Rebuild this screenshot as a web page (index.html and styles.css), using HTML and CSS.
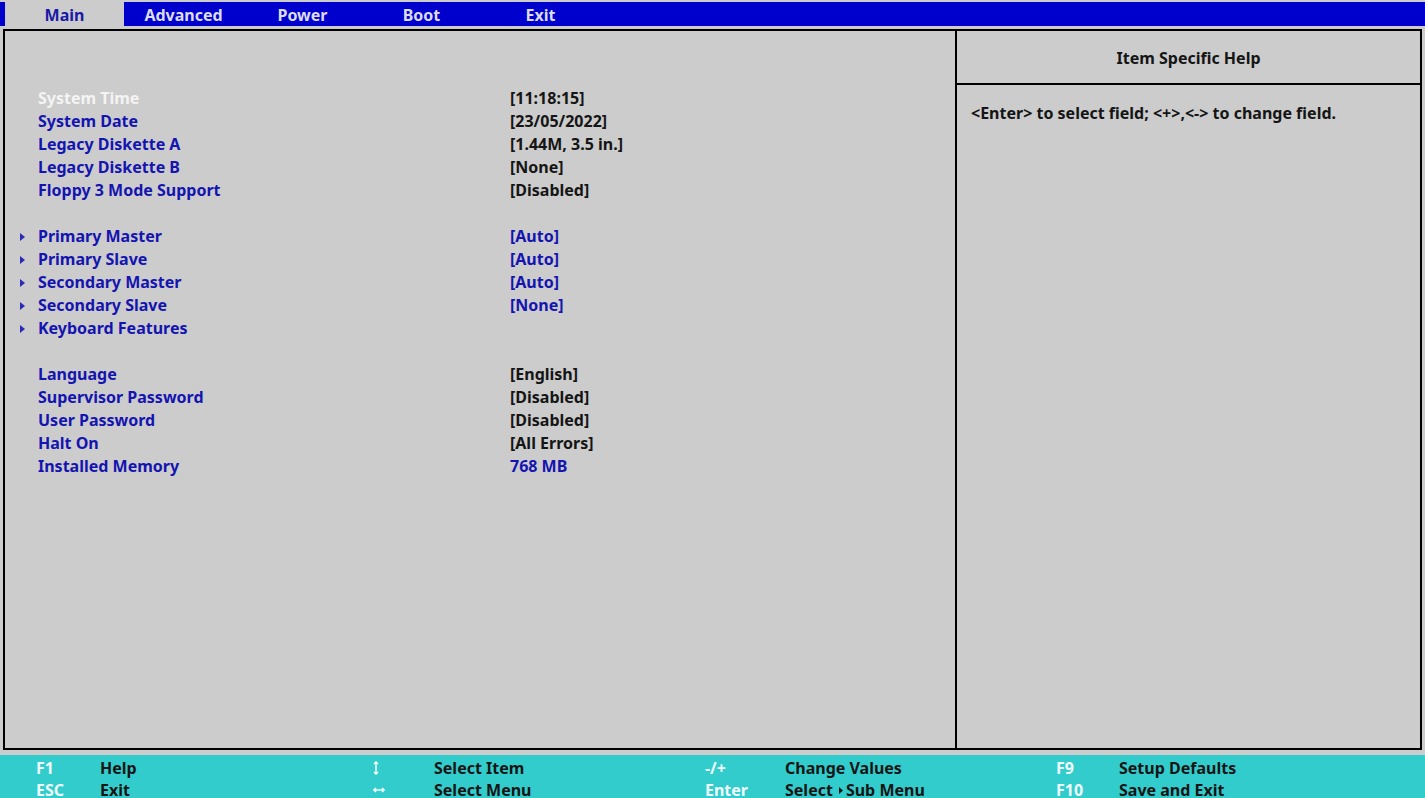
FILE: index.html
```html
<!DOCTYPE html>
<html>
<head>
<meta charset="utf-8">
<link rel="stylesheet" href="styles.css">
</head>
<body>
<div class="screen">
  <div class="topbar">
    <div class="tab active">Main</div>
    <div class="tab">Advanced</div>
    <div class="tab">Power</div>
    <div class="tab">Boot</div>
    <div class="tab">Exit</div>
  </div>
  <div class="box">
    <div class="items">
      <div class="row selected"><span class="label">System Time</span><span class="value">[11:18:15]</span></div>
      <div class="row"><span class="label">System Date</span><span class="value">[23/05/2022]</span></div>
      <div class="row"><span class="label">Legacy Diskette A</span><span class="value">[1.44M, 3.5 in.]</span></div>
      <div class="row"><span class="label">Legacy Diskette B</span><span class="value">[None]</span></div>
      <div class="row"><span class="label">Floppy 3 Mode Support</span><span class="value">[Disabled]</span></div>
      <div class="row blank"></div>
      <div class="row sub"><svg class="tri" width="5" height="8" viewBox="0 0 5 8"><polygon points="0,0 5,4 0,8" /></svg><span class="label">Primary Master</span><span class="value blue">[Auto]</span></div>
      <div class="row sub"><svg class="tri" width="5" height="8" viewBox="0 0 5 8"><polygon points="0,0 5,4 0,8" /></svg><span class="label">Primary Slave</span><span class="value blue">[Auto]</span></div>
      <div class="row sub"><svg class="tri" width="5" height="8" viewBox="0 0 5 8"><polygon points="0,0 5,4 0,8" /></svg><span class="label">Secondary Master</span><span class="value blue">[Auto]</span></div>
      <div class="row sub"><svg class="tri" width="5" height="8" viewBox="0 0 5 8"><polygon points="0,0 5,4 0,8" /></svg><span class="label">Secondary Slave</span><span class="value blue">[None]</span></div>
      <div class="row sub"><svg class="tri" width="5" height="8" viewBox="0 0 5 8"><polygon points="0,0 5,4 0,8" /></svg><span class="label">Keyboard Features</span><span class="value"></span></div>
      <div class="row blank"></div>
      <div class="row"><span class="label">Language</span><span class="value">[English]</span></div>
      <div class="row"><span class="label">Supervisor Password</span><span class="value">[Disabled]</span></div>
      <div class="row"><span class="label">User Password</span><span class="value">[Disabled]</span></div>
      <div class="row"><span class="label">Halt On</span><span class="value">[All Errors]</span></div>
      <div class="row"><span class="label">Installed Memory</span><span class="value blue">768 MB</span></div>
    </div>
    <div class="help">
      <div class="help-title">Item Specific Help</div>
      <div class="help-text">&lt;Enter&gt; to select field; &lt;+&gt;,&lt;-&gt; to change field.</div>
    </div>
  </div>
  <div class="footer">
    <span class="key">F1</span><span class="desc">Help</span>
    <span class="key"><svg class="arrow-icon" width="6" height="14" viewBox="0 0 6 14"><path d="M3 1 V13 M1 3 L3 1 L5 3 M1 11 L3 13 L5 11" /></svg></span><span class="desc">Select Item</span>
    <span class="key">-/+</span><span class="desc">Change Values</span>
    <span class="key">F9</span><span class="desc">Setup Defaults</span>
    <span class="key">ESC</span><span class="desc">Exit</span>
    <span class="key"><svg class="arrow-icon" width="12" height="8" viewBox="0 0 12 8"><path d="M1 4 H11 M3 2 L1 4 L3 6 M9 2 L11 4 L9 6" /></svg></span><span class="desc">Select Menu</span>
    <span class="key">Enter</span><span class="desc">Select <svg class="subtri" width="4" height="7" viewBox="0 0 4 7"><polygon points="0,0 4,3.5 0,7" /></svg>Sub Menu</span>
    <span class="key">F10</span><span class="desc">Save and Exit</span>
  </div>
</div>
</body>
</html>
```

FILE: styles.css
```css
html, body {
  margin: 0;
  padding: 0;
  background: #cccccc;
  overflow: hidden;
}
.screen {
  width: 1425px;
  height: 798px;
  display: flex;
  flex-direction: column;
  font-family: "Noto Sans", "Open Sans", sans-serif;
  font-weight: 700;
  font-size: 16px;
  background: #cccccc;
  overflow: hidden;
}
.topbar {
  margin-top: 2px;
  height: 24px;
  flex-shrink: 0;
  background: #0000cc;
  display: flex;
  padding-left: 5px;
}
.tab {
  width: 119px;
  text-align: center;
  line-height: 26px;
  color: #dcdcf5;
}
.tab.active {
  background: #cccccc;
  color: #1a1aa6;
}
.box {
  margin: 3px 3px 0 3px;
  height: 717px;
  flex-shrink: 0;
  border: 2px solid #000;
  display: flex;
}
.items {
  width: 952px;
  flex-shrink: 0;
  border-right: 2px solid #000;
  padding-top: 56px;
  box-sizing: border-box;
}
.row {
  height: 23px;
  line-height: 23px;
  display: flex;
  align-items: center;
  position: relative;
}
.label {
  width: 472px;
  padding-left: 33px;
  color: #1414b0;
}
.value {
  color: #151515;
}
.value.blue {
  color: #1414b0;
}
.selected .label {
  color: #f4f4f4;
}
.tri {
  position: absolute;
  left: 15px;
  top: 8px;
  fill: #2a2ab8;
}
.help {
  flex: 1;
  display: flex;
  flex-direction: column;
}
.help-title {
  height: 52px;
  border-bottom: 2px solid #000;
  text-align: center;
  line-height: 54px;
  color: #151515;
}
.help-text {
  padding: 18px 0 0 14px;
  line-height: 20px;
  color: #151515;
}
.footer {
  margin-top: 5px;
  flex-shrink: 0;
  height: 60px;
  background: #33cccc;
  display: grid;
  grid-template-columns: 64px 273px 61px 271px 80px 271px 63px 1fr;
  grid-auto-rows: 22px;
  padding: 2px 0 0 36px;
  align-items: center;
}
.key {
  color: #eefcfc;
  display: flex;
  align-items: center;
}
.desc {
  color: #151515;
  display: flex;
  align-items: center;
}
.arrow-icon {
  stroke: #eefcfc;
  stroke-width: 1.6;
  fill: none;
}
.subtri {
  fill: #151515;
  margin: 0 3px 0 6px;
}
```
